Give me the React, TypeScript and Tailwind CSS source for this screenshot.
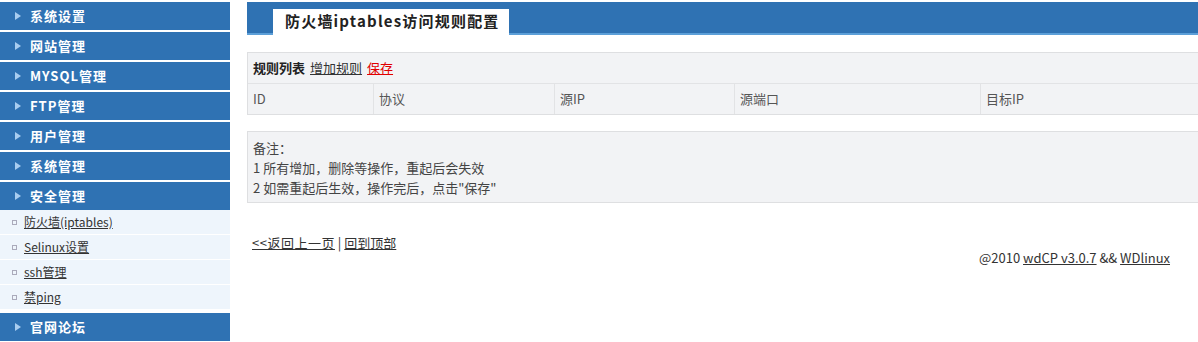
import React from 'react';

const menus = ['系统设置', '网站管理', 'MYSQL管理', 'FTP管理', '用户管理', '系统管理', '安全管理'];
const subItems = ['防火墙(iptables)', 'Selinux设置', 'ssh管理', '禁ping'];
const columns = [
    { label: 'ID', w: 'w-[126px]' },
    { label: '协议', w: 'w-[181px]' },
    { label: '源IP', w: 'w-[180px]' },
    { label: '源端口', w: 'w-[246px]' },
    { label: '目标IP', w: 'flex-1' },
];

function MenuHeader({ title }: { title: string }) {
    return (
        <div className="h-[28px] bg-[#2f72b3] flex items-center pl-[15px] mb-[2px]">
            <svg width="6" height="8" viewBox="0 0 6 8" className="mr-[9px]">
                <path d="M0 0 L6 4 L0 8 Z" fill="#a9cdf0" />
            </svg>
            <span className="text-white text-[13px] font-bold tracking-[1px]">{title}</span>
        </div>
    );
}

export default function App() {
    return (
        <div className="w-[1198px] h-[342px] bg-white flex overflow-hidden text-[12px] text-[#333] font-['Noto_Sans_CJK_SC','Noto_Sans',sans-serif]">
            {/* Sidebar */}
            <div className="w-[230px] shrink-0 pt-[2px]">
                {menus.map((m) => (
                    <MenuHeader key={m} title={m} />
                ))}
                <div className="-mt-[2px] mb-[3px]">
                    {subItems.map((s) => (
                        <div
                            key={s}
                            className="h-[25px] bg-[#eef5fc] border-b border-white flex items-center pl-[12px]"
                        >
                            <span className="w-[5px] h-[5px] border border-[#aab] mr-[7px] mt-[1px]" />
                            <a className="underline text-[#333]">{s}</a>
                        </div>
                    ))}
                </div>
                <MenuHeader title="官网论坛" />
            </div>

            {/* Main */}
            <div className="flex-1 ml-[17px] pt-[2px] flex flex-col text-[13px]">
                <div className="h-[33px] bg-[#2f72b3] border-b-2 border-[#5c9fd8] flex items-end pl-[26px]">
                    <div className="h-[26px] w-[236px] bg-white flex items-center pl-[12px] -mb-[2px] pb-[1px]">
                        <span className="text-[15px] font-bold tracking-[1.2px] text-[#222]">防火墙iptables访问规则配置</span>
                    </div>
                </div>

                <div className="mt-[17px] bg-[#f2f3f5] border border-r-0 border-[#dedfe1]">
                    <div className="h-[31px] flex items-center pl-[5px] border-b border-[#e2e3e5] gap-[5px]">
                        <span className="font-bold text-[#222]">规则列表</span>
                        <a className="underline text-[#333]">增加规则</a>
                        <a className="underline text-[#e10000]">保存</a>
                    </div>
                    <div className="h-[30px] flex">
                        {columns.map((c, i) => (
                            <div
                                key={c.label}
                                className={`${c.w} flex items-center pl-[5px] text-[#555] ${i < columns.length - 1 ? 'border-r border-[#e2e3e5]' : ''}`}
                            >
                                {c.label}
                            </div>
                        ))}
                    </div>
                </div>

                <div className="mt-[16px] bg-[#f2f3f5] border border-r-0 border-[#dedfe1] pl-[5px] pt-[6px] pb-[4px] leading-[20px] text-[#444]">
                    <div>备注：</div>
                    <div>1 所有增加，删除等操作，重起后会失效</div>
                    <div>2 如需重起后生效，操作完后，点击"保存"</div>
                </div>

                <div className="mt-[30px] pl-[5px] text-[#333]">
                    <a className="underline tracking-[0.5px]">&lt;&lt;返回上一页</a> | <a className="underline">回到顶部</a>
                </div>

                <div className="mt-[-5px] pr-[28px] text-right text-[#333]">
                    @2010 <a className="underline">wdCP v3.0.7</a> &amp;&amp; <a className="underline">WDlinux</a>
                </div>
            </div>
        </div>
    );
}
